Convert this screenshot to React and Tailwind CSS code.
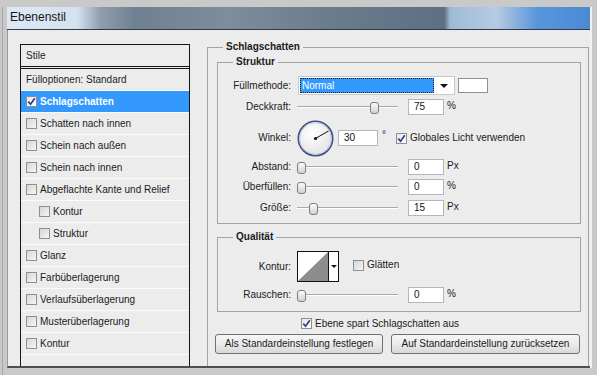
import React from "react";

const Check = ({ checked, light }) => (
  <span
    className={
      light
        ? "inline-flex w-[11px] h-[11px] shrink-0 items-center justify-center border border-[#8e8f8f] bg-gradient-to-br from-[#e6e6e6] to-[#ffffff]"
        : "inline-flex w-[11px] h-[11px] shrink-0 items-center justify-center border border-[#8e8f8f] bg-gradient-to-br from-[#d6d6d6] to-[#f6f6f6]"
    }
  >
    {checked && (
      <svg width="9" height="9" viewBox="0 0 9 9">
        <path d="M1.3 4.6 L3.6 7.2 L7.8 1.2" stroke="#2d3f8f" strokeWidth="1.7" fill="none" />
      </svg>
    )}
  </span>
);

const Num = ({ v, wide }) => (
  <div
    className={
      wide
        ? "w-[40px] h-[16px] border border-[#b3b6bc] bg-white pl-[5px] flex items-center text-[#111]"
        : "w-[36px] h-[16px] border border-[#b3b6bc] bg-white pl-[5px] flex items-center text-[#111]"
    }
  >
    {v}
  </div>
);

const Slider = ({ left }) => (
  <div className="relative ml-[6px] w-[101px] h-[16px] flex items-center">
    <div className="w-full h-[2px] border-t border-[#a9a9a9] border-b border-b-white" />
    <div
      className="absolute top-[3px] w-[9px] h-[12px] rounded-[3px] border border-[#7b7b7b] bg-gradient-to-b from-[#fbfbfb] to-[#d2d2d2]"
      style={{ left }}
    />
  </div>
);

const Label = ({ children }) => (
  <div className="w-[73px] shrink-0 text-right text-[#1b1b1b]">{children}</div>
);

const SliderRow = ({ label, left, value, unit, className }) => (
  <div className={className}>
    <Label>{label}</Label>
    <Slider left={left} />
    <div className="ml-[10px]">
      <Num v={value} />
    </div>
    <div className="ml-[3px] -mt-[2px] text-[#1b1b1b]">{unit}</div>
  </div>
);

const items = [
  { t: "Schlagschatten", sel: true, checked: true },
  { t: "Schatten nach innen" },
  { t: "Schein nach außen" },
  { t: "Schein nach innen" },
  { t: "Abgeflachte Kante und Relief" },
  { t: "Kontur", indent: true },
  { t: "Struktur", indent: true },
  { t: "Glanz" },
  { t: "Farbüberlagerung" },
  { t: "Verlaufsüberlagerung" },
  { t: "Musterüberlagerung" },
  { t: "Kontur" },
];

export default function App() {
  return (
    <div className="w-[597px] h-[375px] overflow-hidden bg-[#c9c9c9] pl-[2px] pt-[7px] font-['Liberation_Sans',sans-serif] text-[10px] leading-[12px]">
      <div className="border-l border-[#a6a6a6] pl-[4px] h-[368px]">
        <div className="w-[585px] border-r-[2px] border-[#f2f2f2]">
          {/* title bar */}
          <div className="h-[23px] border-b border-[#2f3b48] bg-[linear-gradient(90deg,#dce8f5_0%,#d4e2f0_12%,#909eae_16%,#6f8092_22%,#7e8d9c_38%,#6b7c8d_55%,#5d6f81_75%,#9fbad7_76%,#b6cce4_84%,#8eb3de_87%,#5896dc_91%,#4a8ad3_100%)] pl-[3px] pt-[3px]">
            <span className="text-[12px] leading-[14px] text-[#161616]">Ebenenstil</span>
          </div>
          {/* body */}
          <div className="h-[338px] border-l border-[#9a9a9a] border-b-2 border-b-[#4e4e4e] bg-[#ececec] flex items-start overflow-hidden">
            {/* list */}
            <div className="ml-[12px] mt-[14px] w-[170px] h-[340px] border border-[#161616] shrink-0 text-[#1b1b1b]">
              <div className="h-[21px] pl-[5px] flex items-center">Stile</div>
              <div className="h-[3px] border-y border-[#161616]" />
              <div className="h-[22px] pl-[5px] flex items-center border-b border-[#fafafa]">
                Fülloptionen: Standard
              </div>
              {items.map((it, i) => (
                <div
                  key={i}
                  className={
                    it.sel
                      ? "h-[22px] pl-[5px] flex items-center gap-[3px] bg-[#3399ff] text-white font-bold border-b border-[#fafafa]"
                      : it.indent
                      ? "h-[22px] pl-[18px] flex items-center gap-[3px] border-b border-[#fafafa]"
                      : "h-[22px] pl-[5px] flex items-center gap-[3px] border-b border-[#fafafa]"
                  }
                >
                  <Check checked={it.checked} light={it.sel} />
                  <span>{it.t}</span>
                </div>
              ))}
            </div>

            {/* right group */}
            <fieldset className="ml-[17px] mt-[11px] w-[382px] h-[340px] border border-[#a3a3a3] pl-[9px] pr-[7px] text-[#1b1b1b]">
              <legend className="ml-[6px] px-[3px] font-bold leading-[12px]">Schlagschatten</legend>

              {/* Struktur */}
              <fieldset className="mt-[3px] border border-[#a3a3a3] pt-[9px] pb-[7px]">
                <legend className="ml-[15px] px-[3px] font-bold leading-[12px]">Struktur</legend>

                {/* Füllmethode */}
                <div className="h-[17px] flex items-center">
                  <Label>Füllmethode:</Label>
                  <div className="ml-[7px] w-[157px] h-[19px] border border-[#c9c9c9] bg-white flex p-[1px]">
                    <div className="flex-1 border border-dotted border-[#202020] bg-[#3399ff] text-white pl-[1px] flex items-center">
                      Normal
                    </div>
                    <div className="w-[19px] flex items-center justify-center">
                      <div className="w-0 h-0 border-l-[4px] border-r-[4px] border-t-[4px] border-l-transparent border-r-transparent border-t-[#111]" />
                    </div>
                  </div>
                  <div className="ml-[3px] w-[30px] h-[15px] border border-[#8f8f8f] bg-white" />
                </div>

                <SliderRow className="mt-[5px] h-[16px] flex items-center" label="Deckkraft:" left={73} value="75" unit="%" />

                {/* Winkel */}
                <div className="mt-[5px] h-[36px] flex items-center">
                  <Label>Winkel:</Label>
                  <div className="ml-[6px]">
                    <svg width="37" height="37" viewBox="0 0 37 37" className="block">
                      <defs>
                        <radialGradient id="dialg" cx="40%" cy="35%" r="70%">
                          <stop offset="0" stopColor="#ffffff" />
                          <stop offset="1" stopColor="#e2e2e2" />
                        </radialGradient>
                      </defs>
                      <circle cx="18.5" cy="18.5" r="17.2" fill="url(#dialg)" stroke="#3f5182" strokeWidth="1.6" />
                      <circle cx="18.5" cy="18.5" r="15.8" fill="none" stroke="#b9c3d8" strokeWidth="0.8" />
                      <line x1="18.5" y1="18.5" x2="31.5" y2="11" stroke="#111" strokeWidth="1" />
                      <circle cx="18.5" cy="18.5" r="1.6" fill="#111" />
                    </svg>
                  </div>
                  <div className="ml-[4px]">
                    <Num v="30" wide />
                  </div>
                  <div className="ml-[4px] -mt-[7px]">°</div>
                  <div className="ml-[10px] flex items-center gap-[3px]">
                    <Check checked light />
                    <span>Globales Licht verwenden</span>
                  </div>
                </div>

                <SliderRow className="mt-[3px] h-[16px] flex items-center" label="Abstand:" left={0} value="0" unit="Px" />
                <SliderRow className="mt-[4px] h-[16px] flex items-center" label="Überfüllen:" left={0} value="0" unit="%" />
                <SliderRow className="mt-[5px] h-[16px] flex items-center" label="Größe:" left={12} value="15" unit="Px" />
              </fieldset>

              {/* Qualität */}
              <fieldset className="mt-[7px] border border-[#a3a3a3] pt-[8px] pb-[8px]">
                <legend className="ml-[15px] px-[3px] font-bold leading-[12px]">Qualität</legend>
                <div className="h-[31px] flex items-center">
                  <Label>Kontur:</Label>
                  <div className="ml-[6px] h-[31px] w-[42px] border border-[#111] flex bg-white">
                    <svg width="30" height="29" viewBox="0 0 30 29" className="block">
                      <polygon points="0,29 30,0 30,29" fill="#8d8d8d" />
                    </svg>
                    <div className="w-[10px] border-l border-[#111] flex items-center justify-center">
                      <div className="w-0 h-0 border-l-[3px] border-r-[3px] border-t-[3px] border-l-transparent border-r-transparent border-t-[#111]" />
                    </div>
                  </div>
                  <div className="ml-[14px] flex items-center gap-[3px] -mt-[3px]">
                    <Check />
                    <span>Glätten</span>
                  </div>
                </div>
                <SliderRow className="mt-[5px] h-[16px] flex items-center" label="Rauschen:" left={0} value="0" unit="%" />
              </fieldset>

              <div className="mt-[6px] ml-[84px] h-[11px] flex items-center gap-[3px]">
                <Check checked light />
                <span>Ebene spart Schlagschatten aus</span>
              </div>

              <div className="mt-[5px] -ml-[2px] flex gap-[8px]">
                <div className="w-[168px] h-[20px] rounded-[3px] border border-[#707070] bg-gradient-to-b from-[#f5f5f5] via-[#ebebeb] to-[#d8d8d8] flex items-center justify-center">
                  Als Standardeinstellung festlegen
                </div>
                <div className="w-[189px] h-[20px] rounded-[3px] border border-[#707070] bg-gradient-to-b from-[#f5f5f5] via-[#ebebeb] to-[#d8d8d8] flex items-center justify-center">
                  Auf Standardeinstellung zurücksetzen
                </div>
              </div>
            </fieldset>
          </div>
        </div>
      </div>
    </div>
  );
}
